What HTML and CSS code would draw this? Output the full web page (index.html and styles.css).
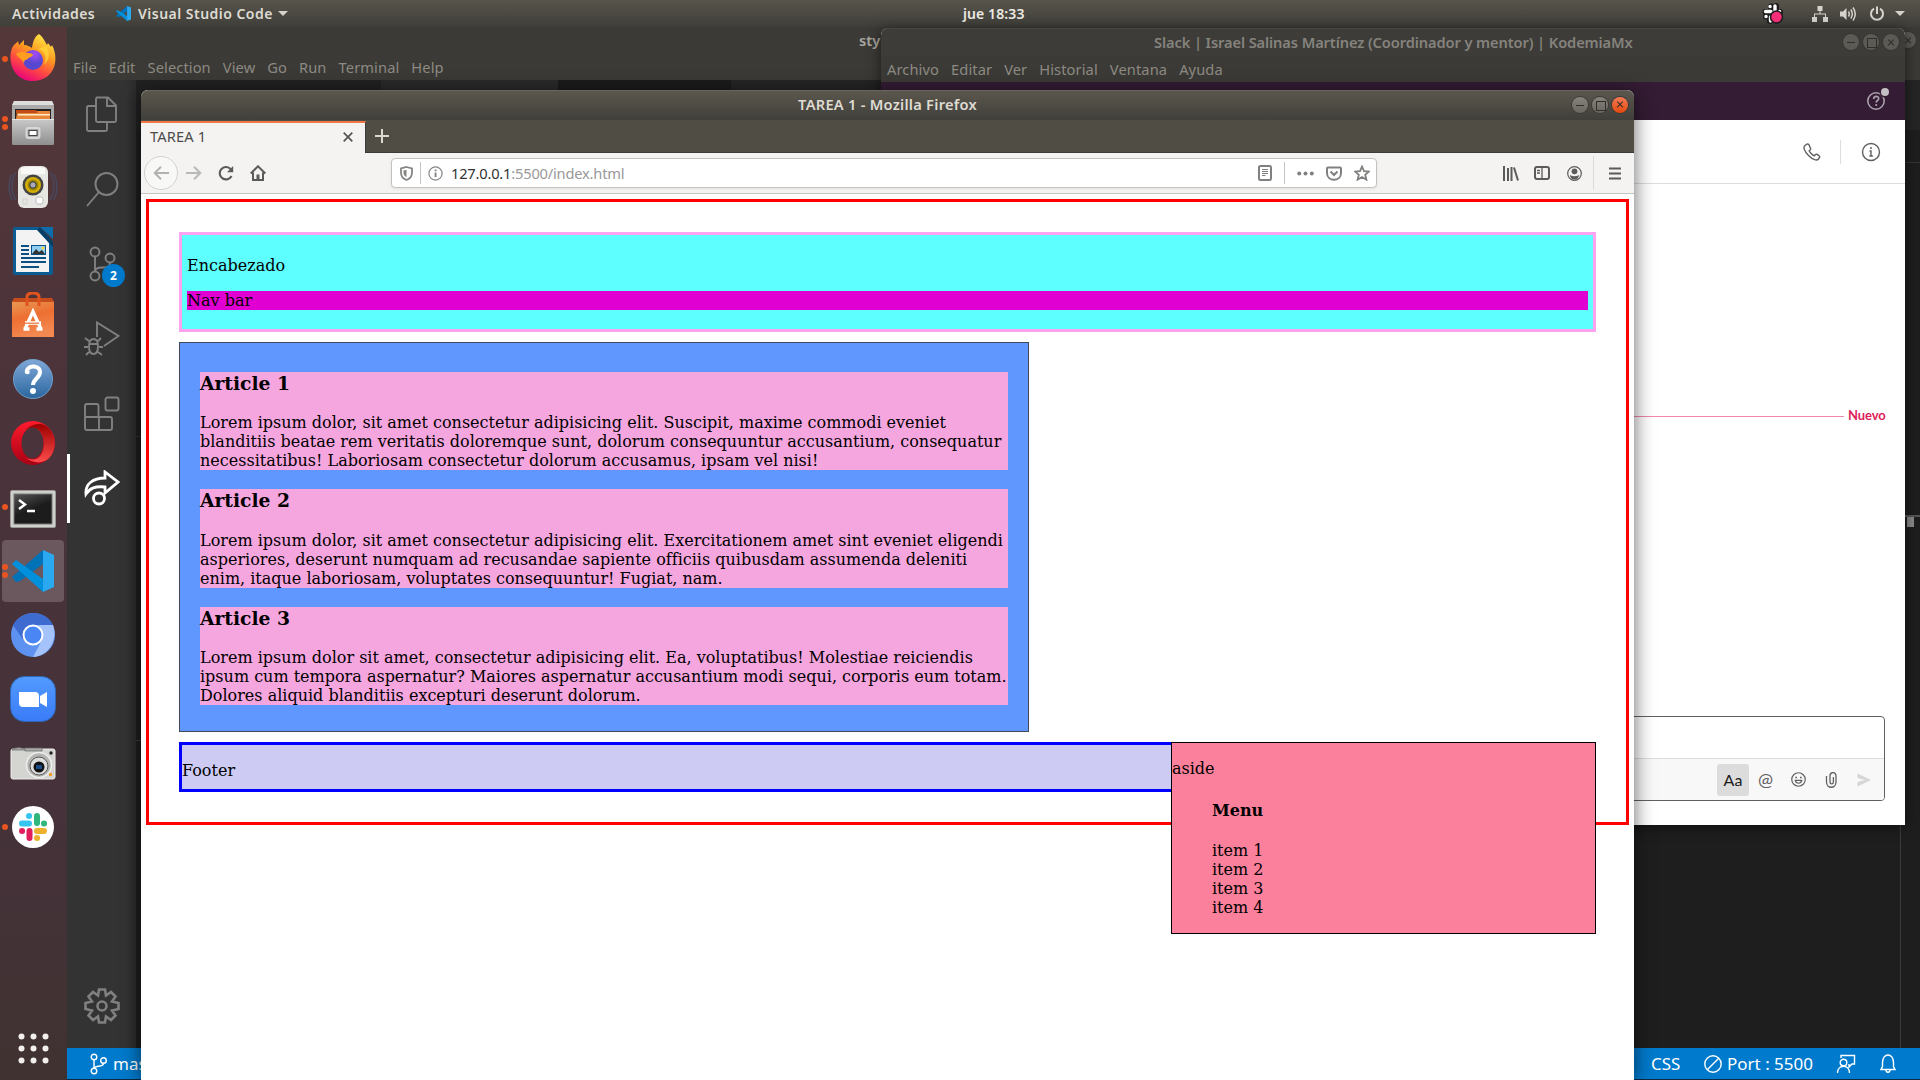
FILE: index.html
```html
<!DOCTYPE html>
<html lang="es">
<head>
<meta charset="utf-8">
<title>Escritorio</title>
<link rel="stylesheet" href="styles.css">
</head>
<body>
<div class="desktop">

  <header class="topbar">
    <div class="topbar-left">
      <span class="t-act">Actividades</span>
      <svg class="t-vs" width="15" height="15" viewBox="0 0 42 42"><path d="M31 0 0 27l4 4 7-1 20-15z" fill="#0072b8"/><path d="M4 11 0 15l31 27V28z" fill="#0090dc"/><path d="M31 0l11 4v34l-11 4z" fill="#2aa9f0"/></svg>
      <span class="t-app">Visual Studio Code</span>
      <i class="caret"></i>
    </div>
    <span class="t-clock">jue 18:33</span>
    <div class="topbar-right">
      <svg class="tr-slack" width="22" height="22" viewBox="0 0 22 22"><g stroke="#1c1c1c" stroke-width="6" stroke-linecap="round"><path d="M9 3.500v3M14 3v5M3.500 9H9M12 9h6M4 13.500h4M8 15v3"/></g><g stroke="#fff" stroke-width="3.400" stroke-linecap="round"><path d="M8 3.500h.1M13 3v5M3.500 8.500H9M17.500 8.500h.1M4 13.500h.1M8.500 14v4"/></g><circle cx="14.500" cy="14" r="6" fill="#fa2f7a" stroke="#1c1c1c" stroke-width="1.500"/></svg>
      <svg class="tr-net" width="16" height="16" viewBox="0 0 16 16" fill="#d6d3cd"><path d="M5.500 0h5v5h-5zM0 11h5v5H0zM11 11h5v5h-5zM7.500 5h1v3h-1zM2 7.500h12V11h-1V8.500H3V11H2z"/></svg>
      <svg class="tr-vol" width="17" height="16" viewBox="0 0 17 16" fill="none" stroke="#d6d3cd" stroke-width="1.500"><path d="M0 5.500h3L6.500 2v12L3 10.500H0z" fill="#d6d3cd" stroke="none"/><path d="M8.500 5.500q1.500 2.500 0 5M10.800 3.500q3 4.500 0 9M13 1.500q4.500 6.500 0 13"/></svg>
      <svg class="tr-pow" width="16" height="16" viewBox="0 0 16 16" fill="none" stroke="#d6d3cd" stroke-width="2"><path d="M5 2.600a6 6 0 1 0 6 0M8 .5V8"/></svg>
      <i class="caret"></i>
    </div>
  </header>

  <nav class="dock">
    <div class="slot one"><svg width="46" height="48" viewBox="0 0 46 48"><defs><linearGradient id="ff" x1=".8" y1="0" x2=".3" y2="1"><stop offset="0" stop-color="#fff04a"/><stop offset=".4" stop-color="#ff9a1f"/><stop offset=".7" stop-color="#ff4545"/><stop offset="1" stop-color="#e6007e"/></linearGradient><radialGradient id="fp" cx=".6" cy=".2"><stop offset="0" stop-color="#a84bf5"/><stop offset="1" stop-color="#5547d0"/></radialGradient></defs><path d="M29 0c5 4 6 8 8 11l1-2 3 4 1-2c8 15 2 36-19 36C4 47-3 28 2 14c2-4 5-5 6-7l1 4 5-5v5c4 0 6 2 8 3 1-6 2-11 7-14z" fill="url(#ff)"/><circle cx="23" cy="26" r="10" fill="url(#fp)"/><path d="M6 20c4-3 9-2 11-1 2 0 5 0 6 2-2 3-5 2-6 5-2-1-3 1-3 4-1-5-5-5-8-10z" fill="#ff9d20"/><path d="M28 15c8 2 9 10 6 16 5-4 7-12 2-19z" fill="#ffd83c" opacity=".7"/></svg></div>
    <div class="slot two"><svg width="44" height="46" viewBox="0 0 44 46"><defs><linearGradient id="cb" x2="0" y2="1"><stop stop-color="#c9c9c9"/><stop offset="1" stop-color="#8f8f8f"/></linearGradient></defs><path d="M3 1h38l2 5v37q0 2-2 2H3q-2 0-2-2V6z" fill="#aaa"/><path d="M3 1h38l2 4H1z" fill="#ddd"/><path d="M4 9h36v10H4z" fill="#222"/><path d="M6 11h33v8H5z" fill="#e8863a"/><path d="M5 10h20l2 3H5z" fill="#c04a18"/><path d="M7 14h32v1.500H7z" fill="#ffe9c8"/><path d="M1 19h42v24q0 2-2 2H3q-2 0-2-2z" fill="url(#cb)"/><path d="M1 19h42v1H1z" fill="#e6e6e6"/><rect x="15.500" y="28" width="13" height="10" rx="2" fill="#aaa" stroke="#d8d8d8" stroke-width="2"/><rect x="18" y="30.500" width="8" height="5" fill="#fff" stroke="#444"/></svg></div>
    <div class="slot"><svg width="50" height="46" viewBox="0 0 50 46"><g fill="none" stroke="#48485f" stroke-width="1.500"><path d="M8 8q-8 14 0 28M4 10q-6 12 0 26M42 8q8 14 0 28M46 10q6 12 0 26"/></g><rect x="10" y="2" width="30" height="42" rx="6" fill="#e6e6e2"/><path d="M13 4q12-3 24 0v6H13z" fill="#fff" opacity=".7"/><circle cx="25" cy="21" r="10.500" fill="#444"/><circle cx="25" cy="21" r="8" fill="#d5b000"/><circle cx="25" cy="21" r="5.500" fill="#9c8408"/><circle cx="25" cy="21" r="3.200" fill="#aab" stroke="#333"/><rect x="28" y="33" width="7" height="7" rx="2" fill="#fff" stroke="#bbb"/><rect x="15" y="35" width="4" height="5" fill="none" stroke="#d0d0cc"/></svg></div>
    <div class="slot"><svg width="42" height="50" viewBox="0 0 42 50"><path d="M3 1h25l13 15v31q0 2-2 2H3q-2 0-2-2V3q0-2 2-2z" fill="#0b5c93"/><path d="M4 4h22l11 13v29H4z" fill="#f3f3f3"/><path d="M28 1h13v12z" fill="#0d6eac"/><path d="M28 1 41 16v5L25 4z" fill="#063e66"/><g stroke="#0b5184" stroke-width="1.800"><path d="M9 20h8M9 24h8M9 28h8M9 32h25M9 36h25M9 41h18"/></g><rect x="19.500" y="19.500" width="14" height="9" fill="#8fd0f2" stroke="#0b5184"/><path d="m20 28 4-5 3 3 3-2 3 4z" fill="#333"/><circle cx="31" cy="22" r="1.500" fill="#fbd444"/></svg></div>
    <div class="slot"><svg width="44" height="46" viewBox="0 0 44 46"><defs><linearGradient id="sw" x2=".3" y2="1"><stop stop-color="#e89a55"/><stop offset=".5" stop-color="#ed6f32"/><stop offset="1" stop-color="#f38850"/></linearGradient></defs><path d="M1 9h42v36H1z" fill="url(#sw)"/><path d="M3 6h38l2 4H1z" fill="#c74c1c"/><path d="M16 14V5q0-4 6-4t6 4v9" fill="none" stroke="#e0531c" stroke-width="3"/><path d="m14.500 36 7.500-16.500L29.500 36M14 31h16M12.500 37h6M25.500 37h6" fill="none" stroke="#fff" stroke-width="3.400"/><path d="M14 31.200h14" stroke="#ed6f32" stroke-width="1.200"/></svg></div>
    <div class="slot"><svg width="42" height="42" viewBox="0 0 42 42"><defs><linearGradient id="hp" x2="0" y2="1"><stop stop-color="#80a8d8"/><stop offset="1" stop-color="#2a669f"/></linearGradient></defs><circle cx="21" cy="21" r="19.500" fill="url(#hp)" stroke="#6f9fca"/><path d="M15 15c-2-8 13-9 13-1 0 6-7 7-7 13" fill="none" stroke="#fff" stroke-width="4"/><circle cx="15.500" cy="14" r="2.300" fill="#fff"/><circle cx="21" cy="33" r="3" fill="#fff"/></svg></div>
    <div class="slot"><svg width="46" height="46" viewBox="0 0 46 46"><defs><linearGradient id="op" x2="0" y2="1"><stop stop-color="#ff1b2d"/><stop offset="1" stop-color="#a70014"/></linearGradient><linearGradient id="oq" x2="0" y2="1"><stop stop-color="#9c0000"/><stop offset="1" stop-color="#ff4b4b"/></linearGradient></defs><ellipse cx="23" cy="23" rx="22" ry="22" fill="url(#op)"/><path d="M16 9C30-2 44 6 44.500 23S30 48 16 38c16 6 18-9 18-15S32 5 16 9z" fill="url(#oq)"/><ellipse cx="22.500" cy="23" rx="11" ry="15.500" fill="#4a333a"/></svg></div>
    <div class="slot one low"><svg width="46" height="38" viewBox="0 0 46 38"><defs><linearGradient id="tm" x2=".5" y2="1"><stop stop-color="#555"/><stop offset=".6" stop-color="#1c1c1c"/></linearGradient></defs><rect x=".5" y=".5" width="45" height="37" rx="1.500" fill="#cfcfcc" stroke="#9a9a98"/><rect x="4" y="4" width="38" height="30" fill="url(#tm)" stroke="#777"/><path d="m9 10 6 4.500-6 4.500M17 21h8" fill="none" stroke="#fff" stroke-width="2.400"/></svg></div>
    <div class="slot two active"><svg width="42" height="42" viewBox="0 0 42 42"><path d="M31 0 0 27l4 5 4-1 23-17z" fill="#0072b8"/><path d="M4 10 0 14l31 28V29z" fill="#0090dc"/><path d="M31 0l11 5v32l-11 5z" fill="#2aa9f0"/></svg></div>
    <div class="slot"><svg width="46" height="46" viewBox="0 0 46 46"><circle cx="23" cy="23" r="22" fill="#5e92f0"/><path d="M3 13C12-3 36-3 43 13H23c-8 0-9 7-9 16z" fill="#3d6bcf"/><path d="M43 13c5 13-3 31-20 32l9-17c3-6 0-11-4-15z" fill="#a4c3fb"/><circle cx="23" cy="23" r="9.500" fill="#4a87f4" stroke="#fff" stroke-width="2"/></svg></div>
    <div class="slot"><svg width="46" height="46" viewBox="0 0 46 46"><defs><linearGradient id="zm" x2="0" y2="1"><stop stop-color="#529bff"/><stop offset="1" stop-color="#3a7bf7"/></linearGradient></defs><rect x=".5" y=".5" width="45" height="45" rx="14" fill="url(#zm)" stroke="#2f66b5"/><path d="M9 16h16q4 0 4 4v11H13q-4 0-4-4zM30 20l7-4v15l-7-4z" fill="#fff"/></svg></div>
    <div class="slot"><svg width="46" height="34" viewBox="0 0 46 34"><rect x="1" y="3" width="44" height="30" rx="2" fill="#d4d4d1" stroke="#eee"/><path d="M2 4q7-5 13 0zM15 2h17v3H15z" fill="#aaa" stroke="#666" stroke-width=".7"/><circle cx="29" cy="19" r="12.500" fill="#b5b5b3" stroke="#eee" stroke-width="1.500"/><circle cx="29" cy="20" r="9" fill="#ddd" stroke="#555"/><circle cx="29" cy="21" r="5.500" fill="#111"/><path d="M26 19h6v4h-6z" fill="#194a88"/><circle cx="41" cy="7" r="1.700" fill="#222"/><path d="M39 27h3v3h-3z" fill="#f0a030"/></svg></div>
    <div class="slot one"><svg width="42" height="42" viewBox="0 0 42 42"><circle cx="21" cy="21" r="21" fill="#fff"/><g stroke-width="6" stroke-linecap="round"><path d="M10 17.500h7M17 10h.1" stroke="#36c5f0"/><path d="M25 10v7M32 17.500h.1" stroke="#2eb67d"/><path d="M25 25h7M25 32h.1" stroke="#ecb22e"/><path d="M17.500 25v7M10 25h.1" stroke="#e01e5a"/></g></svg></div>
    <svg class="apps" width="31" height="31" viewBox="0 0 31 31" fill="#f2efec"><circle cx="3.500" cy="3.500" r="3"/><circle cx="15.500" cy="3.500" r="3"/><circle cx="27.500" cy="3.500" r="3"/><circle cx="3.500" cy="15.500" r="3"/><circle cx="15.500" cy="15.500" r="3"/><circle cx="27.500" cy="15.500" r="3"/><circle cx="3.500" cy="27.500" r="3"/><circle cx="15.500" cy="27.500" r="3"/><circle cx="27.500" cy="27.500" r="3"/></svg>
  </nav>

  <section class="window vscode">
    <div class="vs-title"><span class="vs-name">sty</span><i class="wbtn dim x"></i></div>
    <div class="vs-menu"><span>File</span><span>Edit</span><span>Selection</span><span>View</span><span>Go</span><span>Run</span><span>Terminal</span><span>Help</span></div>
    <div class="vs-main">
      <div class="activity">
        <div class="act"><svg width="36" height="36" viewBox="0 0 36 36"><path d="M12 1.500h12l8 8v15q0 1.500-1.500 1.500H13.500q-1.500 0-1.500-1.500V3q0-1.500 1.500-1.500M23 2v8h9M12 10H4.500Q3 10 3 11.500v22Q3 35 4.500 35h17q1.500 0 1.500-1.500V26"/></svg></div>
        <div class="act"><svg width="36" height="36" viewBox="0 0 36 36"><circle cx="22.500" cy="13" r="11"/><path d="M15 21 3 35"/></svg></div>
        <div class="act"><svg width="36" height="36" viewBox="0 0 36 36"><circle cx="11" cy="6" r="4.500"/><circle cx="26" cy="12" r="4.500"/><circle cx="11" cy="30" r="4.500"/><path d="M11 10.500v15M26 16.500c0 5-4 5-8 5s-7 1-7 4"/></svg><b class="badge">2</b></div>
        <div class="act"><svg width="36" height="36" viewBox="0 0 36 36"><path d="M13 16V1.500L34.500 15 20 25M5 25q0-7 4.500-7t4.500 7q0 8-4.500 8T5 25M5 23h9M5 20l-4-3M14 20l3-3M4 26H0M15 26h4M5 31l-3 3M14 31l4 3"/></svg></div>
        <div class="act"><svg width="36" height="36" viewBox="0 0 36 36"><rect x="21.500" y="1.500" width="13" height="13" rx="2"/><path d="M3 8h9.500q2 0 2 2v11H26q2 0 2 2v9q0 2-2 2H3q-2 0-2-2V10q0-2 2-2M1 21h14v13"/></svg></div>
        <div class="act on"><svg width="36" height="36" viewBox="0 0 36 36"><path d="M21 2v6C9 8 1 14 2 24c4-6 9-8 19-7v6L34 12zM21 2"/><circle cx="15" cy="28.500" r="5.500"/></svg></div>
        <div class="act gear"><svg width="36" height="36" viewBox="0 0 36 36"><path d="M15 1.500h6l1 6 5-3.500 4.500 4.500L28 13.500l6.500 1.500v6L28 22.500l3.500 5-4.500 4.500-5-3.500-1 6h-6l-1-6L9 32l-4.500-4.500 3.500-5L1.500 21v-6L8 13.500 4.500 8.500 9 4l5 3.500z"/><circle cx="18" cy="18" r="4.500"/></svg></div>
      </div>
      <div class="editor">
        <div class="ed-left">
          <div class="tabs"><i class="tab-a"></i><i class="tab-b"></i><i class="tab-c"></i></div>
          <div class="pane l1"></div>
          <div class="pane l2"></div>
        </div>
        <div class="ed-right">
          <div class="tabs"></div>
          <div class="crumbs"></div>
          <div class="pane r1"></div>
          <i class="thumb"></i>
          <div class="r2"></div>
        </div>
      </div>
    </div>
    <div class="status">
      <svg width="17" height="22" viewBox="0 0 17 22"><circle cx="4" cy="4" r="2.800"/><circle cx="13.500" cy="7.500" r="2.800"/><circle cx="4" cy="18" r="2.800"/><path d="M4 7v8M13.500 10.500c0 4-9.500 1.500-9.500 5"/></svg>
      <span class="st-branch">master</span>
      <span class="st-css">CSS</span>
      <svg width="18" height="18" viewBox="0 0 18 18"><circle cx="9" cy="9" r="8.200"/><path d="M3.500 14.500l11-11"/></svg>
      <span class="st-port">Port : 5500</span>
      <svg class="st-fb" width="20" height="20" viewBox="0 0 20 20"><path d="M5 4V1.500h13.500V10H16l-3 3v-3"/><circle cx="7.500" cy="8.500" r="3.300"/><path d="M1.500 19c0-9 12-9 12 0"/></svg>
      <svg class="st-bell" width="18" height="20" viewBox="0 0 18 20"><path d="M2 15.500h14l-1.500-3V8.500c0-10-11-10-11 0v4zM7 16c0 3 4 3 4 0"/></svg>
    </div>
  </section>

  <section class="window slack">
    <div class="sl-title"><span>Slack | Israel Salinas Martínez (Coordinador y mentor) | KodemiaMx</span><div class="btns"><i class="wbtn dim m"></i><i class="wbtn dim r"></i><i class="wbtn dim x"></i></div></div>
    <div class="sl-menu"><span>Archivo</span><span>Editar</span><span>Ver</span><span>Historial</span><span>Ventana</span><span>Ayuda</span></div>
    <div class="sl-purple"><svg width="26" height="26" viewBox="0 0 26 26"><circle cx="11" cy="15" r="8.200" fill="none" stroke="#aaa0ac" stroke-width="1.600"/><path d="M8.700 13c0-3.500 5-3.500 5-.5 0 2-2.500 2-2.500 4" fill="none" stroke="#aaa0ac" stroke-width="1.700"/><circle cx="11.200" cy="19" r="1.100" fill="#aaa0ac"/><circle cx="20" cy="6" r="5.500" fill="#341c34"/><circle cx="20" cy="6" r="4" fill="#c3bec4"/></svg></div>
    <div class="sl-head">
      <svg width="18" height="18" viewBox="0 0 18 18" fill="none" stroke="#616061" stroke-width="1.400"><path d="M2 2.500C0 4 1 8 5.500 12.500S14 18 15.500 16l1-1.500q.6-1-.5-1.800l-2-1.300q-1-.5-1.800.4l-.8 1q-1 .2-3-2t-2.200-3l1-.9q.7-.8.3-1.700L6.300 2.500Q5.300.5 4 1.200z"/></svg>
      <i></i>
      <svg width="20" height="20" viewBox="0 0 20 20"><circle cx="10" cy="10" r="8.500" fill="none" stroke="#616061" stroke-width="1.400"/><path d="M8.500 9H10v5M8.300 14h3.600" fill="none" stroke="#616061" stroke-width="1.400"/><circle cx="10" cy="6" r="1" fill="#616061"/></svg>
    </div>
    <div class="sl-body"><div class="new"><i></i><b>Nuevo</b></div></div>
    <div class="composer">
      <div class="c-tools">
        <span class="aa">Aa</span>
        <span class="at">@</span>
        <svg width="15" height="15" viewBox="0 0 16 16" fill="none" stroke="#616061" stroke-width="1.300"><circle cx="8" cy="8" r="7.200"/><path d="M4.500 9c1 4 6 4 7 0z"/><path d="M5.500 5v1.600M10.500 5v1.600" stroke-width="1.800"/></svg>
        <svg width="15" height="16" viewBox="0 0 15 16" fill="none" stroke="#616061" stroke-width="1.300"><path d="M2.500 4v6c0 7 9.500 7 9.500 0V4c0-4.500-6-4.500-6 0v6c0 2.500 3.400 2.500 3.400 0V5"/></svg>
        <svg width="14" height="14" viewBox="0 0 14 14" fill="#d6d6d6"><path d="M.5.5 14 7 .5 13.500V9L8 7 .5 5z"/></svg>
      </div>
    </div>
  </section>

  <section class="window firefox">
    <div class="ff-title"><span>TAREA 1 - Mozilla Firefox</span><div class="btns"><i class="wbtn m"></i><i class="wbtn r"></i><i class="wbtn x hot"></i></div></div>
    <div class="ff-tabs">
      <div class="ff-tab"><span>TAREA 1</span><svg width="10" height="10" viewBox="0 0 10 10"><path d="m.7.700 8.600 8.600M9.300.7.700 9.300" stroke="#555" stroke-width="1.700"/></svg></div>
      <svg class="plus" width="14" height="14" viewBox="0 0 14 14"><path d="M7 0v14M0 7h14" stroke="#dcd9d2" stroke-width="2"/></svg>
    </div>
    <div class="ff-bar">
      <span class="back"><svg width="16" height="14" viewBox="0 0 16 14" fill="none" stroke="#b2b2b0" stroke-width="2"><path d="M16 7H1.500M8 .7 1.700 7 8 13.300"/></svg></span>
      <svg class="fwd" width="16" height="14" viewBox="0 0 16 14" fill="none" stroke="#b9b9b7" stroke-width="2"><path d="M0 7h14.500M8 .7 14.300 7 8 13.300"/></svg>
      <svg class="rel" width="16" height="16" viewBox="0 0 16 16" fill="none" stroke="#5b5b59" stroke-width="2.100"><path d="M13.500 11A6.200 6.200 0 1 1 12 3.500L14 5.500"/><path d="M15.200 1v6.200H9z" fill="#5b5b59" stroke="none"/></svg>
      <svg class="home" width="16" height="16" viewBox="0 0 16 16" fill="none" stroke="#5b5b59" stroke-width="2"><path d="M.7 8.500 8 1.300l7.300 7.200M3 7.500V15h10V7.500"/><path d="M6.500 9.500h3V15h-3z" fill="#5b5b59" stroke="none"/></svg>
      <div class="url">
        <svg class="u-sh" width="13" height="15" viewBox="0 0 13 15"><path d="M6.500 1 12 2.500v4c0 4-2.500 6.500-5.500 7.500C3.500 13 1 10.500 1 6.500v-4z" fill="none" stroke="#858583" stroke-width="1.800"/><path d="M6.500 3.700v7.500C4.500 10 3.500 9 3.500 6.500v-2z" fill="#858583"/></svg>
        <i class="sep"></i>
        <svg class="u-in" width="15" height="15" viewBox="0 0 15 15"><circle cx="7.500" cy="7.500" r="6.600" fill="none" stroke="#858583" stroke-width="1.200"/><path d="M6.600 6.500h1.900V11H6.600zM6.600 3.600h1.900v1.700H6.600z" fill="#858583"/></svg>
        <span class="u-host">127.0.0.1</span><span class="u-path">:5500/index.html</span>
        <div class="u-right">
          <svg width="14" height="16" viewBox="0 0 14 16" fill="none" stroke="#80807e"><rect x="1" y="1" width="12" height="14" rx="1.500" stroke-width="2"/><path d="M4 4.500h6M4 6.500h6M4 8.500h6M4 10.500h3.500"/></svg>
          <i class="sep"></i>
          <svg class="dots" width="17" height="5" viewBox="0 0 17 5" fill="#80807e"><circle cx="2.200" cy="2.500" r="2"/><circle cx="8.500" cy="2.500" r="2"/><circle cx="14.800" cy="2.500" r="2"/></svg>
          <svg width="16" height="15" viewBox="0 0 16 15" fill="none" stroke="#80807e" stroke-width="2"><path d="M2 1.500h12q1 0 1 1V7c0 9-14 9-14 0V2.500q0-1 1-1zM4.500 5.500 8 9l3.500-3.500"/></svg>
          <svg width="16" height="16" viewBox="0 0 16 16" fill="none" stroke="#80807e" stroke-width="1.800"><path d="m8 1.500 2 4.600 5 .4-3.800 3.300 1.200 4.900L8 12.100l-4.400 2.600 1.200-4.900L1 6.500l5-.4z"/></svg>
        </div>
      </div>
      <svg class="lib" width="16" height="15" viewBox="0 0 16 15" stroke="#5b5b59" stroke-width="2"><path d="M1 0v15M5 2v13M8.500 1v14M11 1.500 15 14.500"/></svg>
      <svg class="side" width="16" height="14" viewBox="0 0 16 14" fill="none" stroke="#5b5b59" stroke-width="2"><rect x="1" y="1" width="14" height="12" rx="2"/><path d="M8 1v12M3 4.500h3M3 7h3" stroke-width="1.300"/></svg>
      <svg class="acc" width="15" height="15" viewBox="0 0 15 15"><circle cx="7.500" cy="7.500" r="6.800" fill="none" stroke="#5b5b59" stroke-width="1.200"/><circle cx="7.500" cy="5.300" r="2.900" fill="#5b5b59"/><path d="M2.800 9q4.700 2.500 9.400 0-1 4.500-4.700 4.500T2.800 9z" fill="#5b5b59"/></svg>
      <i class="bar-sep"></i>
      <svg class="ham" width="12" height="13" viewBox="0 0 12 13" stroke="#5b5b59" stroke-width="2"><path d="M0 1.500h12M0 6.500h12M0 11.500h12"/></svg>
    </div>
    <div class="page">
      <div class="container">
        <div class="p-header"><p>Encabezado</p><div class="p-nav">Nav bar</div></div>
        <div class="p-section">
          <article><h3>Article 1</h3><p>Lorem ipsum dolor, sit amet consectetur adipisicing elit. Suscipit, maxime commodi eveniet<br>blanditiis beatae rem veritatis doloremque sunt, dolorum consequuntur accusantium, consequatur<br>necessitatibus! Laboriosam consectetur dolorum accusamus, ipsam vel nisi!</p></article>
          <article><h3>Article 2</h3><p>Lorem ipsum dolor, sit amet consectetur adipisicing elit. Exercitationem amet sint eveniet eligendi<br>asperiores, deserunt numquam ad recusandae sapiente officiis quibusdam assumenda deleniti<br>enim, itaque laboriosam, voluptates consequuntur! Fugiat, nam.</p></article>
          <article><h3>Article 3</h3><p>Lorem ipsum dolor sit amet, consectetur adipisicing elit. Ea, voluptatibus! Molestiae reiciendis<br>ipsum cum tempora aspernatur? Maiores aspernatur accusantium modi sequi, corporis eum totam.<br>Dolores aliquid blanditiis excepturi deserunt dolorum.</p></article>
        </div>
        <div class="p-footer"><p>Footer</p>
          <div class="p-aside"><p>aside</p><ul><li class="menu-h">Menu</li><li>item 1</li><li>item 2</li><li>item 3</li><li>item 4</li></ul></div>
        </div>
      </div>
    </div>
  </section>
</div>
</body>
</html>
```

FILE: styles.css
```css
* { box-sizing: border-box; }
body { margin: 0; overflow: hidden; font-family: "Noto Sans", "Open Sans", sans-serif; font-size: 14.67px; }
svg { display: block; flex: none; }
i { display: block; flex: none; font-style: normal; }
span { white-space: nowrap; }
.desktop { position: relative; width: 1920px; height: 1080px; overflow: hidden; background: #1e1e1e; }
.window { position: absolute; display: flex; flex-direction: column; }

/* Top panel */
.topbar { display: grid; grid-template-columns: 1fr auto 1fr; align-items: center; height: 27px; padding: 0 15px 0 12px; background: linear-gradient(#57544b, #3f3e39); color: #dfdbd2; font-weight: 600; font-size: 14px; }
.topbar-left, .topbar-right { display: flex; align-items: center; }
.topbar-right { justify-content: flex-end; }
.t-act { width: 104px; letter-spacing: .42px; }
.t-vs { margin-right: 7px; }
.t-app { width: 140px; letter-spacing: .48px; }
.t-clock { width: 62px; margin-left: 71px; color: #eeebe4; letter-spacing: .1px; }
.caret { border: 5px solid transparent; border-top-color: #d6d3cd; border-bottom: 0; }
.tr-slack { margin-right: 28px; }
.tr-net { margin-right: 12px; }
.tr-vol { margin-right: 12px; }
.tr-pow { margin-right: 10px; }

/* Dock */
.dock { position: absolute; left: 0; top: 27px; width: 67px; height: 1053px; padding-right: 1px; display: flex; flex-direction: column; align-items: center; background: linear-gradient(#543739, #4b333a 35%, #45323a 75%, #403231); }
.slot { position: relative; display: flex; align-items: center; justify-content: center; width: 62px; height: 62px; margin: 1px 0; border-radius: 4px; }
.slot:first-child { padding-bottom: 2px; }
.slot.low { padding-top: 3px; }
.slot.active { background: #6a585e; }
.slot.one::before, .slot.two::before { content: ""; position: absolute; left: 0; top: 28px; width: 6px; height: 6px; border-radius: 3px; background: #e95420; }
.slot.two::before { top: 24px; box-shadow: 0 8px #e95420; }
.apps { margin-top: auto; margin-bottom: 16px; }

/* Round window buttons */
.wbtn { position: relative; width: 16px; height: 16px; border-radius: 50%; background: linear-gradient(#86837b, #68665f); box-shadow: 0 0 0 1px #3a3935; }
.wbtn.dim { background: #5b5a55; box-shadow: 0 0 0 1px #373632; }
.wbtn.hot { background: linear-gradient(#f37a55, #e2490f); }
.wbtn.m::before { content: ""; position: absolute; left: 4px; top: 8px; width: 8px; height: 1px; background: #2f2e2a; }
.wbtn.r::before { content: ""; position: absolute; left: 4px; top: 4px; width: 8px; height: 8px; border: 1px solid #2f2e2a; }
.wbtn.x::before, .wbtn.x::after { content: ""; position: absolute; left: 4px; top: 7.500px; width: 8px; height: 1.200px; background: #2f2e2a; transform: rotate(45deg); }
.wbtn.x::after { transform: rotate(-45deg); }
.btns { display: flex; gap: 4px; }

/* Editor window */
.vscode { left: 67px; top: 27px; width: 1853px; height: 1053px; background: #1e1e1e; }
.vs-title { display: flex; align-items: center; justify-content: space-between; height: 27px; padding: 0 4px 1px 792px; background: #3b3a36; color: #aaa79f; font-weight: 600; }
.vs-menu, .sl-menu { display: flex; gap: 12px; color: #8d8a83; background: #3b3a36; letter-spacing: .1px; }
.vs-menu { height: 26px; padding: 0 6px; line-height: 26px; }
.vs-main { display: flex; flex: 1; min-height: 0; }
.activity { display: flex; flex-direction: column; width: 69px; background: linear-gradient(90deg, #333 85%, #2c2c2c); }
.act { position: relative; display: flex; align-items: center; justify-content: center; height: 75px; padding: 0 0 7px 0; }
.act svg { fill: none; stroke: #808080; stroke-width: 1.900; }
.act.on { border-left: 3px solid #fff; height: 69px; margin-top: -1px; padding: 0 3px 1px 0; }
.act.on svg { stroke: #fff; stroke-width: 2.800; }
.act.gear { margin-top: auto; margin-bottom: 5px; padding-bottom: 0; }
.act.gear svg { stroke-width: 2.600; }
.badge { position: absolute; left: 35px; top: 34px; width: 23px; height: 23px; border-radius: 50%; background: #007acc; color: #fff; font: bold 12px/23px "Noto Sans", sans-serif; text-align: center; }
.editor { flex: 1; display: flex; background: #1e1e1e; }
.ed-left { flex: 1; display: flex; flex-direction: column; }
.ed-right { width: 38px; display: flex; flex-direction: column; }
.tabs { display: flex; height: 50px; background: #252526; }
.tab-a { width: 245px; background: #212121; }
.tab-b { width: 177px; background: #2a2a2a; }
.tab-c { width: 173px; background: #1b1b1b; }
.crumbs { height: 33px; border-bottom: 1px solid #333; }
.pane { border-bottom: 1px solid #303030; }
.l1 { height: 307px; }
.l2 { height: 304px; border-color: #3a3a3a; }
.r1 { height: 354px; border-bottom: 2px solid #555; }
.thumb { align-self: flex-end; width: 7px; height: 10px; margin-right: 6px; background: #8a8a8a; }
.r2 { flex: 1; margin-right: 19px; border-right: 1px solid #3c3c3c; }
.status { display: flex; align-items: center; height: 32px; padding-left: 23px; background: #007acc; border-bottom: 1px solid #0b2a44; color: #fff; font-size: 17px; }
.status svg { fill: none; stroke: #fff; stroke-width: 1.400; }
.st-branch { width: 1544px; padding-left: 6px; }
.st-css { width: 53px; }
.st-port { width: 95px; padding-left: 5px; }
.st-fb { margin-left: 19px; }
.st-bell { margin-left: 23px; }

/* Chat window */
.slack { left: 881px; top: 28px; width: 1024px; height: 797px; background: #fff; border-radius: 7px 7px 0 0; overflow: hidden; box-shadow: 0 2px 14px rgba(0,0,0,.55); }
.sl-title { display: flex; align-items: center; height: 29px; padding: 0 6px 2px 273px; background: #3d3c38; color: #85837d; font-weight: 600; border-top: 1px solid #47463f; letter-spacing: -.11px; }
.sl-title span { padding-bottom: 1px; }
.sl-title .btns { margin-left: auto; }
.sl-menu { height: 25px; padding-left: 6px; line-height: 24px; letter-spacing: .1px; }
.sl-purple { display: flex; justify-content: flex-end; height: 38px; padding: 4px 14px 0 0; background: #341c34; }
.sl-head { display: flex; align-items: center; justify-content: flex-end; height: 64px; padding-right: 24px; border-bottom: 1px solid #ddd; }
.sl-head i { width: 1px; height: 24px; margin: 0 20px 0 19px; background: #ddd; }
.sl-body { flex: 1; padding-top: 223px; }
.new { display: flex; align-items: center; height: 18px; padding-right: 19px; }
.new i { flex: 1; height: 1px; background: #f188a8; margin: 0 4px 0 0; }
.new b { width: 38px; padding-bottom: 2px; color: #e01e5a; font: bold 13px/16px Lato, sans-serif; letter-spacing: -.1px; }
.composer { display: flex; flex-direction: column; justify-content: flex-end; height: 85px; margin: 0 20px 24px 20px; border: 1px solid #616061; border-radius: 4px; overflow: hidden; }
.c-tools { display: flex; align-items: center; justify-content: flex-end; gap: 18px; height: 42px; padding-right: 13px; border-top: 1px solid #ddd; background: #f8f8f8; }
.aa { width: 32px; height: 32px; margin-right: -9px; border-radius: 3px; background: #dcdcdc; color: #1d1c1d; font: 16px/32px Lato, sans-serif; text-align: center; }
.at { display: flex; justify-content: center; width: 15px; color: #616061; font: 18px/28px Lato, sans-serif; padding-bottom: 2px; }

/* Browser window */
.firefox { left: 141px; top: 90px; width: 1493px; height: 990px; background: #fff; border-radius: 7px 7px 0 0; box-shadow: 0 3px 20px rgba(0,0,0,.6); }
.ff-title { display: grid; grid-template-columns: 1fr auto 1fr; align-items: center; height: 30px; padding: 0 6px 2px; border-radius: 7px 7px 0 0; background: linear-gradient(#5b574e, #403f3a); border-top: 1px solid #68655c; color: #dfdbd2; font-weight: 600; letter-spacing: .25px; }
.ff-title span { grid-column: 2; padding-bottom: 2px; }
.ff-title .btns { justify-self: end; }
.ff-tabs { display: flex; align-items: center; height: 33px; background: #504d45; border-bottom: 1px solid #3c3b37; }
.ff-tab { display: flex; align-items: center; justify-content: space-between; width: 225px; height: 33px; margin-bottom: -1px; padding: 0 12px 3px 9px; background: #f4f3f2; border-top: 2px solid #f07746; border-right: 1px solid #3c3b37; color: #4c4c4c; margin-top: 1px; letter-spacing: .15px; }
.ff-tab span { padding-bottom: 2px; }
.plus { margin-left: 9px; }
.ff-bar { display: flex; align-items: center; height: 41px; background: #f4f3f2; border-bottom: 1px solid #c4c4c2; }
.back { display: flex; align-items: center; justify-content: center; width: 34px; height: 34px; margin-left: 3px; border: 1px solid #d2d2d0; border-radius: 50%; background: #f8f8f7; }
.fwd { margin-left: 8px; }
.rel { margin-left: 16px; }
.home { margin-left: 16px; }
.url { display: flex; align-items: center; width: 986px; height: 30px; margin-left: 125px; border: 1px solid #c2c2c0; border-radius: 4px; background: #fff; box-shadow: 0 1px 3px rgba(0,0,0,.08); }
.u-sh { margin-left: 8px; }
.sep { width: 1px; height: 22px; margin-left: 7px; background: #c4c4c4; }
.u-in { margin: 0 8px 0 7px; }
.u-host, .u-path { letter-spacing: -.2px; }
.u-host { color: #333; }
.u-path { color: #999; }
.u-right { display: flex; align-items: center; margin-left: auto; padding-right: 6px; }
.u-right .sep { margin: 0 12px; }
.u-right svg + svg { margin-left: 12px; }
.lib { margin-left: 126px; }
.side { margin-left: 15px; }
.acc { margin-left: 17px; }
.bar-sep { width: 1px; height: 34px; margin-left: 11px; background: #dadad8; }
.ham { margin-left: 15px; }

/* Practice page */
.page { flex: 1; padding: 5px; color: #000; font: 16px/19px "DejaVu Serif", serif; }
.page p { margin: 0; }
.container { height: 626px; border: 3px solid red; padding: 30px; }
.p-header { height: 100px; padding: 21px 5px 0; border: 3px solid #ffa2f0; background: #5effff; }
.p-nav { margin-top: 16px; background: #e000d2; }
.p-section { width: 850px; height: 390px; margin-top: 10px; padding: 29px 20px 0; border: 1px solid #434956; background: #6097ff; }
.p-section article { margin-bottom: 19.180px; background: #f6a6de; }
.p-section h3 { margin: 0 0 18.720px; font-size: 18.720px; line-height: 22.500px; }
.p-section article p { white-space: nowrap; }
.p-footer { position: relative; height: 50px; margin-top: 10px; padding-top: 16px; border: 3px solid #00f; background: #cdcbf3; }
.p-aside { position: absolute; right: -3px; top: -3px; width: 425px; height: 192px; padding-top: 16px; border: 1px solid #000; background: #fb809b; }
.p-aside ul { margin: 0; padding: 23px 0 0 40px; list-style: none; }
.menu-h { margin-bottom: 21px; font-weight: bold; }
```
